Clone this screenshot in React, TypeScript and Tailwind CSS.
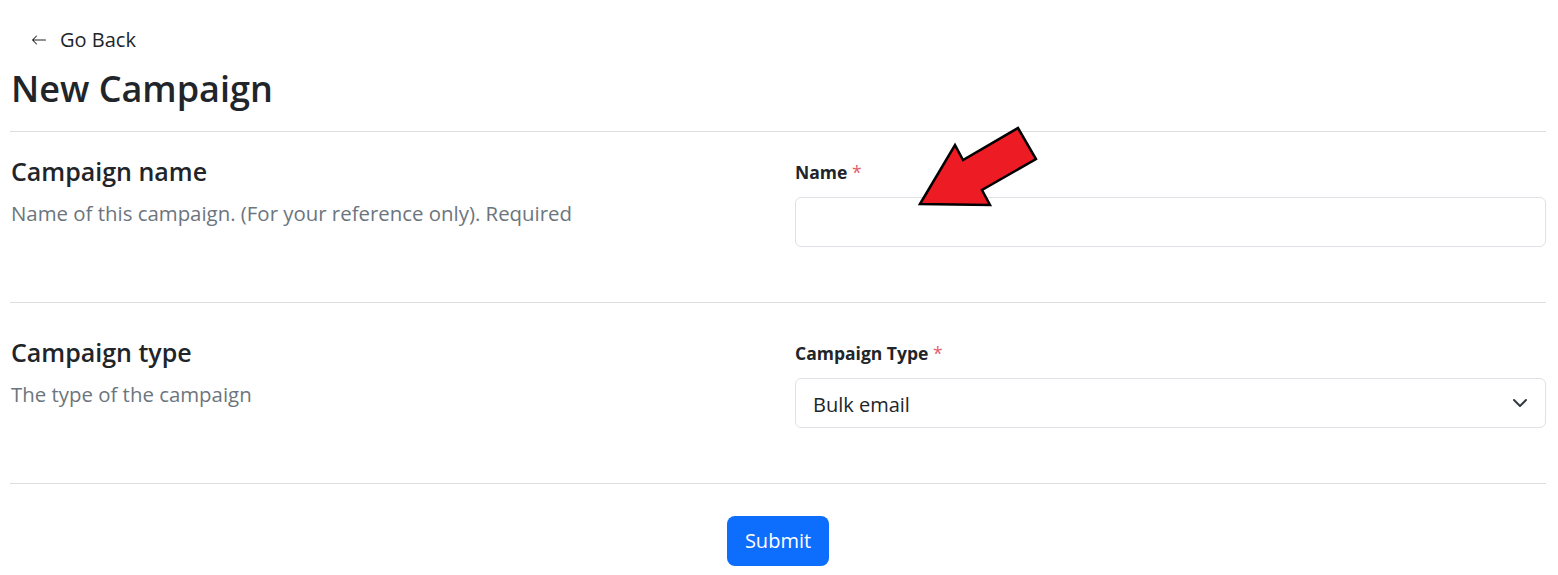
import React from "react";

export default function App() {
  const font = { fontFamily: '"Open Sans", "Noto Sans", sans-serif' };
  return (
    <div className="relative min-h-[575px] bg-white text-[#212529]" style={font}>
      <div className="pl-[10px] pr-[12px]">
        {/* Go back */}
        <div className="pt-[25px] flex">
          <button className="flex items-center gap-[13px] pl-[21px] h-[30px] text-[20px] leading-[30px] text-[#212529]">
            <svg width="16" height="16" viewBox="0 0 16 16" fill="currentColor">
              <path fillRule="evenodd" d="M15 8a.5.5 0 0 0-.5-.5H2.707l3.147-3.146a.5.5 0 1 0-.708-.708l-4 4a.5.5 0 0 0 0 .708l4 4a.5.5 0 0 0 .708-.708L2.707 8.5H14.5A.5.5 0 0 0 15 8z" />
            </svg>
            <span>Go Back</span>
          </button>
        </div>
        <h1 className="mt-[10px] text-[36px] leading-[48px] font-semibold pl-[1px]">New Campaign</h1>

        {/* Section 1 */}
        <div className="mt-[18px] border-t border-[#dedede] flex pb-[55px]">
          <div className="flex-1 pt-[24px] pl-[1px]">
            <div className="text-[25px] leading-[30px] font-semibold">Campaign name</div>
            <div className="mt-[12px] text-[20.4px] leading-[30px] text-[#6c757d]">
              Name of this campaign. (For your reference only). Required
            </div>
          </div>
          <div className="w-[751px] pt-[28px]">
            <div className="text-[17.5px] leading-[24px] font-bold">
              Name <span className="text-[#e35d6a] font-normal">*</span>
            </div>
            <input
              className="mt-[13px] w-full h-[50px] border border-[#dee2e6] rounded-[6px] px-4 text-[20px] outline-none"
              type="text"
            />
          </div>
        </div>

        {/* Section 2 */}
        <div className="border-t border-[#dedede] flex pb-[55px]">
          <div className="flex-1 pt-[34px] pl-[1px]">
            <div className="text-[25px] leading-[30px] font-semibold">Campaign type</div>
            <div className="mt-[12px] text-[20.4px] leading-[30px] text-[#6c757d]">The type of the campaign</div>
          </div>
          <div className="w-[751px] pt-[38px]">
            <div className="text-[17.5px] leading-[24px] font-bold">
              Campaign Type <span className="text-[#e35d6a] font-normal">*</span>
            </div>
            <div className="mt-[13px] relative w-full h-[50px] border border-[#dee2e6] rounded-[6px] flex items-center pl-[17px] pt-[3px] text-[20px]">
              <span>Bulk email</span>
              <svg
                className="absolute right-[17px] top-1/2 -translate-y-1/2"
                width="16"
                height="16"
                viewBox="0 0 16 16"
                fill="none"
                stroke="#343a40"
                strokeWidth="2"
                strokeLinecap="round"
                strokeLinejoin="round"
              >
                <path d="m2 5 6 6 6-6" />
              </svg>
            </div>
          </div>
        </div>

        {/* Submit */}
        <div className="border-t border-[#dedede] flex justify-center pt-[32px]">
          <button className="w-[102px] h-[50px] bg-[#0d6efd] text-white text-[20px] rounded-[8px]">Submit</button>
        </div>
      </div>

      {/* Red arrow annotation */}
      <svg className="absolute left-0 top-0 pointer-events-none" width="1558" height="575">
        <polygon
          points="920,204 955,145 963,160 1018,128 1036,159 982,190 990,205"
          fill="#ed1c24"
          stroke="#000"
          strokeWidth="2.5"
          strokeLinejoin="miter"
        />
      </svg>
    </div>
  );
}
